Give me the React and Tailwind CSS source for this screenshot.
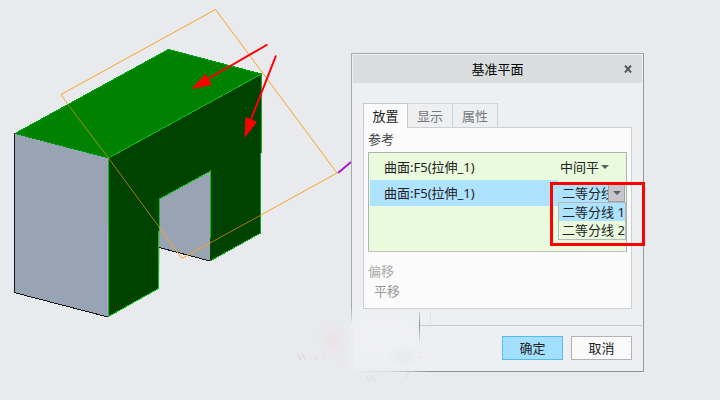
const references = ["曲面:F5(拉伸_1)", "曲面:F5(拉伸_1)"];
const tabs = ["放置", "显示", "属性"];

function Model() {
  return (
    <svg className="w-[351px] h-[400px] shrink-0" viewBox="0 0 351 400" fill="none">
      <polygon points="15,133.5 108.5,158 108,317 14,292.5" fill="#98a4b4" />
      <polygon points="159.5,199 210.5,171 210,261 159.5,247.5" fill="#98a4b4" />
      <polygon points="15,133.5 168.5,49 261.5,74 108.5,158" fill="#008200" />
      <path
        d="M108.5 158 261.5 74V153H261V233L210 261 210.5 171 159.5 199 159 288.500 108 317Z"
        fill="#004200"
      />

      <g strokeWidth="1" shapeRendering="crispEdges">
        <path d="M14.500 133V219M14 219V292.500L108 317M159 247.500 210 261" stroke="#15151c" />
        <path d="M15 133.500 168.500 49.500 261.500 74" stroke="#00a010" />
        <path d="M15 133.500 108.500 158" stroke="#009210" />
        <path d="M108.500 158 261.500 74" stroke="#10b820" />
        <path d="M108.500 158V225" stroke="#10b820" />
        <path d="M107.500 225V316" stroke="#b49cdc" />
        <path d="M108.500 225V316.500L158.500 288.500V231M159.500 231V199L210.500 171V238" stroke="#10c020" />
        <path d="M210 261 260.500 233V153M261.500 153V74" stroke="#10a820" />
      </g>

      {/* datum plane outline, dimmed where it crosses the solid */}
      <path d="M67.500 104 61 94.500 215.500 9.500 337 173 261 215M159 227 182 258.500 210 243" stroke="#f6a623" />
      <path d="M67.500 104 108.500 158" stroke="#a89000" />
      <path d="M108.500 158 159 227M210 243 261 215" stroke="#a87c00" />

      <path d="M338 173 351 162" stroke="#aa18cc" strokeWidth="2" />

      <path d="M267.500 44.500 206 80M276 55.500 250 122" stroke="#ff0000" strokeWidth="2" />
      <path d="M191.500 89 205.500 74 212 85ZM244.500 138 245.500 117 257 122Z" fill="#ff0000" />
    </svg>
  );
}

function Smudge() {
  return (
    <svg
      className="absolute -left-16 top-[252px] w-[160px] h-[80px] pointer-events-none"
      viewBox="0 0 160 80"
    >
      <defs>
        <filter id="soft" x="-50%" y="-50%" width="200%" height="200%">
          <feGaussianBlur stdDeviation="4" />
        </filter>
        <linearGradient id="fade" x1="0" y1="0" x2="0" y2="1">
          <stop offset="0" stopColor="#8c8f94" stopOpacity="0.3" />
          <stop offset="0.4" stopColor="#8c8f94" />
          <stop offset="1" stopColor="#8c8f94" stopOpacity="0" />
        </linearGradient>
        <linearGradient id="edge" x1="0" y1="0" x2="0" y2="1">
          <stop offset="0" stopColor="#ebecef" stopOpacity="0" />
          <stop offset="0.25" stopColor="#ebecef" />
          <stop offset="1" stopColor="#ebecef" />
        </linearGradient>
        <linearGradient id="floor" x1="0" y1="0" x2="1" y2="0">
          <stop offset="0" stopColor="#ebecef" />
          <stop offset="0.5" stopColor="#ebecef" stopOpacity="0.8" />
          <stop offset="1" stopColor="#ebecef" stopOpacity="0" />
        </linearGradient>
      </defs>
      <rect x="62" y="2" width="4" height="64" fill="url(#edge)" />
      <rect x="62" y="62" width="80" height="4" fill="url(#floor)" />
      <rect x="64" y="16" width="67" height="6" fill="#eeeff1" />
      <g filter="url(#soft)">
        <rect x="70" y="17" width="56" height="30" fill="#f0f1f3" />
        <ellipse cx="45" cy="34" rx="10" ry="12" fill="#ebe3e6" />
        <ellipse cx="115" cy="50" rx="12" ry="8" fill="#e8eaec" />
      </g>
      <rect x="131" y="6" width="1" height="32" fill="url(#fade)" />
      <rect x="142" y="6" width="1" height="12" fill="#dfe1e3" />
      <path d="M10 48l2 6 3-6 2 6M28 52v2M36 50v2M56 56v2M133 50v2" stroke="#efd0d3" fill="none" />
      <path d="M78 69l3 6 3-6 3 6M118 72l3-6" stroke="#dcdde2" fill="none" />
    </svg>
  );
}

function Caret() {
  return (
    <svg className="w-2 h-1 pointer-events-none" viewBox="0 0 8 4">
      <path d="M0 0H8L4 4Z" fill="#5c6066" />
    </svg>
  );
}

function Dialog() {
  return (
    <section
      role="dialog"
      aria-labelledby="title"
      className="relative flex-1 max-w-[293px] mt-[53px] self-start border border-[#a8aaaa] border-b-[#8e9090] border-r-[#969898] p-px bg-[#eeeff1]"
    >
      <header className="relative flex items-center justify-center h-7 bg-[#d9dddd]">
        <h1 id="title" className="text-black">基准平面</h1>
        <button aria-label="关闭" className="absolute right-1.5 p-1">
          <svg className="w-2 h-2" viewBox="0 0 8 8">
            <path d="M1 0.500 7 7.500M7 0.500 1 7.500" stroke="#55585c" strokeWidth="2" />
          </svg>
        </button>
      </header>

      <div className="px-2.5 pt-5">
        <div role="tablist" className="flex">
          {tabs.map((tab, i) => (
            <button
              key={tab}
              role="tab"
              aria-selected={i === 0}
              className={
                i === 0
                  ? "relative w-[45px] h-[25px] -mb-px border border-b-0 border-[#c6cacd] bg-[#fbfbfb] text-[#222] z-10"
                  : "w-[45px] h-6 border border-l-0 border-b-0 border-[#d0d3d5] text-[#777]"
              }
            >
              {tab}
            </button>
          ))}
        </div>

        <div className="border border-[#cdd1d4] bg-[#fbfbfb] px-1 pt-0.5 h-[182px]">
          <h2 className="text-[#444]">参考</h2>
          <ul className="relative mt-1 h-[100px] border border-[#b0b2b4] border-b-[#c0c2c2] p-px bg-[#e9fbdc]">
            <li className="flex items-center h-[26px] pl-3.5">
              <span className="flex-1">{references[0]}</span>
              <label className="relative flex items-center w-[67px]">
                <select aria-label="约束 1" className="appearance-none w-full pl-0.5 outline-none">
                  <option>中间平</option>
                </select>
                <span className="absolute right-4 flex">
                  <Caret />
                </span>
              </label>
            </li>
            <li className="flex items-center h-[26px] pl-3.5 bg-[#aee3ff]">
              <span className="flex-1">{references[1]}</span>
              <div className="relative w-[67px] h-[26px] pt-1 bg-[#e9fbdc]">
                <label className="flex h-[18px] bg-[#aee3ff]">
                  <select
                    aria-label="约束 2"
                    className="appearance-none w-[50px] pl-1 h-[18px] overflow-hidden outline-none"
                  >
                    <option>二等分线 1</option>
                  </select>
                  <span className="flex items-center justify-center w-[17px] h-[18px] border border-[#a0a2a6] bg-[#c6c6cc]">
                    <Caret />
                  </span>
                </label>
                <ul
                  role="listbox"
                  aria-label="约束 2 选项"
                  className="absolute left-0 top-[22px] w-[68px] border border-[#b4b8b8] bg-[#e9fbdc] z-10 whitespace-nowrap"
                >
                  <li role="option" aria-selected="true" className="h-[18px] pl-[3px] bg-[#aee3ff]">
                    二等分线 1
                  </li>
                  <li role="option" aria-selected="false" className="h-[18px] pl-[3px]">
                    二等分线 2
                  </li>
                </ul>
              </div>
            </li>
            <li className="absolute -right-[19px] top-[29px] w-[95px] h-16 border-3 border-[#ff0000] z-20 pointer-events-none" aria-hidden="true" />
          </ul>
          <h2 className="mt-2.5 text-[#aaa]">偏移</h2>
          <p className="mt-0.5 pl-1.5 text-[#999]">平移</p>
        </div>
      </div>

      <footer className="flex justify-end gap-2 mt-4 px-2.5 py-2.5 border-t border-[#c8cbcd]">
        <button className="w-[61px] h-6 border border-[#52bcf4] bg-[#a3e0ff]">确定</button>
        <button className="w-[61px] h-6 border border-[#b0b4b8] bg-[#f9f9f9]">取消</button>
      </footer>

      <Smudge />
    </section>
  );
}

export default function App() {
  return (
    <main className="flex min-h-screen bg-[#e8eaee] font-['Noto_Sans','Noto_Sans_CJK_SC',sans-serif] text-[13px] leading-[18px] text-[#222]">
      <Model />
      <Dialog />
    </main>
  );
}
